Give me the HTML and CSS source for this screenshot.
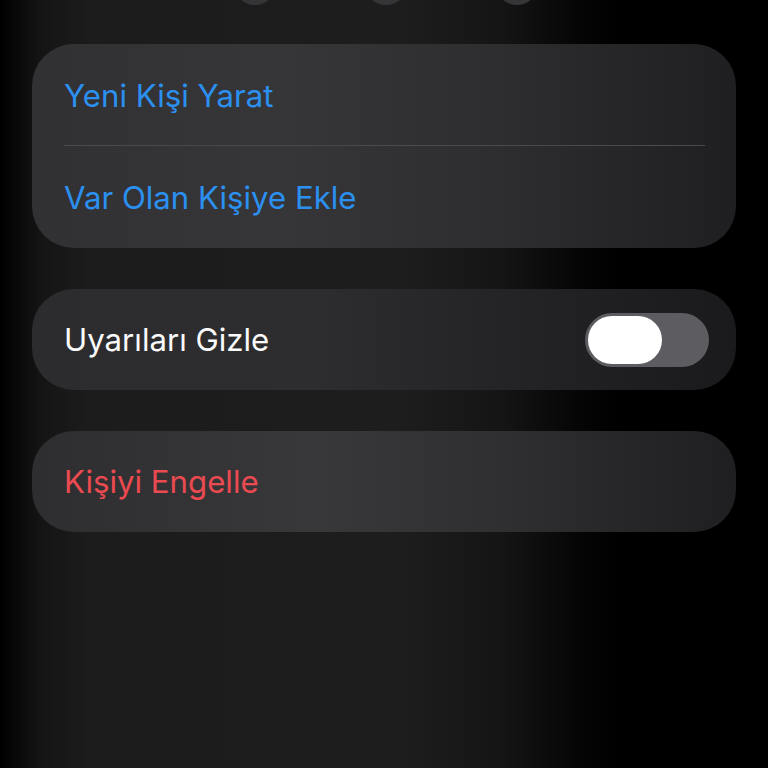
FILE: index.html
```html
<!DOCTYPE html>
<html lang="tr">
<head>
<meta charset="utf-8">
<link rel="stylesheet" href="styles.css">
</head>
<body>
<div class="screen">
  <div class="top-buttons">
    <span class="circle"></span>
    <span class="circle"></span>
    <span class="circle"></span>
  </div>
  <div class="card card-contact">
    <div class="row blue">Yeni Kişi Yarat</div>
    <div class="divider"></div>
    <div class="row blue">Var Olan Kişiye Ekle</div>
  </div>
  <div class="card card-mute">
    <div class="row white">Uyarıları Gizle</div>
    <div class="toggle"><span class="knob"></span></div>
  </div>
  <div class="card card-block">
    <div class="row red">Kişiyi Engelle</div>
  </div>
</div>
</body>
</html>
```
FILE: styles.css
```css
html, body {
  margin: 0;
  padding: 0;
  width: 768px;
  height: 768px;
  overflow: hidden;
  background: #000;
}
.screen {
  width: 768px;
  height: 768px;
  background: linear-gradient(to right, #000 0px, #141414 40px, #1c1c1c 90px, #1d1d1d 400px, #151515 500px, #050505 580px, #000 620px);
  font-family: Inter, Roboto, "Liberation Sans", sans-serif;
  display: flex;
  flex-direction: column;
  align-items: center;
  position: relative;
}
.top-buttons {
  display: flex;
  gap: 89px;
  margin-top: -37px;
  margin-left: 4px;
  height: 44px;
  margin-bottom: 37px;
}
.circle {
  width: 42px;
  height: 42px;
  border-radius: 50%;
  background: #353537;
}
.card {
  width: 704px;
  box-sizing: border-box;
  border-radius: 42px;
  padding: 0 32px;
  background: linear-gradient(to right, #313134 0%, #363639 35%, #2e2e31 65%, #1f1f21 100%);
}
.card-contact {
  height: 204px;
  display: flex;
  flex-direction: column;
  padding-right: 31px;
}
.card-contact .row {
  height: 101px;
  display: flex;
  align-items: center;
  padding-top: 2px;
  box-sizing: border-box;
}
.divider {
  height: 1px;
  background: #4a4a4e;
}
.card-mute {
  margin-top: 41px;
  height: 101px;
  display: flex;
  align-items: center;
  justify-content: space-between;
  padding-right: 27px;
  background: linear-gradient(to right, #2c2c2e 0%, #2d2d2f 40%, #232325 70%, #1a1a1c 100%);
}
.card-block {
  margin-top: 41px;
  height: 101px;
  display: flex;
  align-items: center;
  background: linear-gradient(to right, #2e2e30 0%, #38383b 40%, #303033 65%, #1f1f21 100%);
}
.row {
  font-size: 31.2px;
  letter-spacing: 0;
}
.blue { color: #2b90f0; }
.white { color: #fafafa; }
.red { color: #ea4a50; }
.toggle {
  width: 124px;
  height: 54px;
  border-radius: 27px;
  background: #5d5c61;
  box-sizing: border-box;
  padding: 3px;
  display: flex;
}
.knob {
  width: 74px;
  height: 48px;
  border-radius: 24px;
  background: #fff;
}
```
